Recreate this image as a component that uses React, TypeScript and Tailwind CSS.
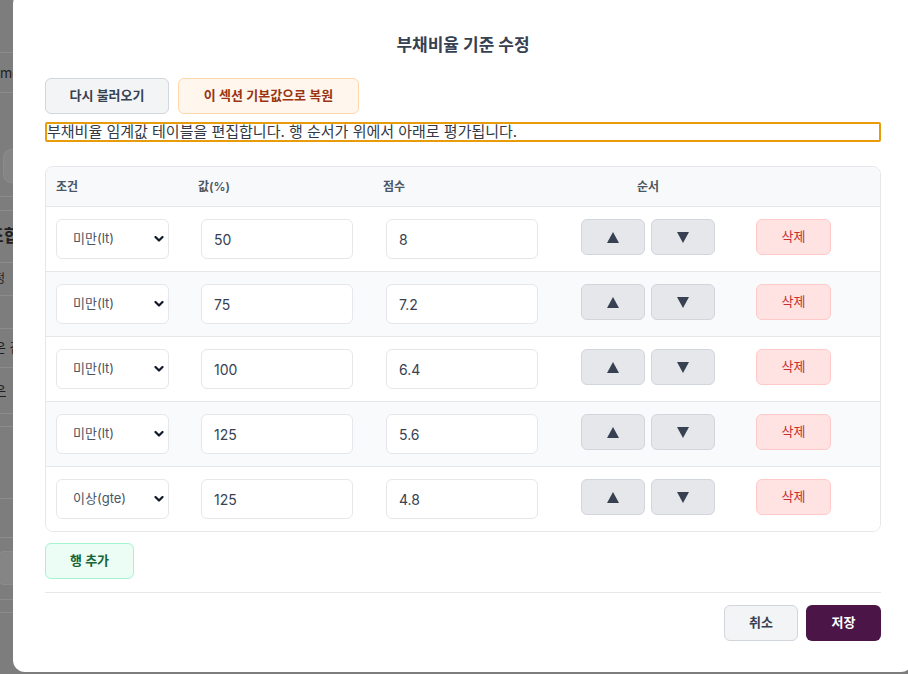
import React from 'react';

type Row = { op: string; value: string; score: string };

const rows: Row[] = [
  { op: '미만(lt)', value: '50', score: '8' },
  { op: '미만(lt)', value: '75', score: '7.2' },
  { op: '미만(lt)', value: '100', score: '6.4' },
  { op: '미만(lt)', value: '125', score: '5.6' },
  { op: '이상(gte)', value: '125', score: '4.8' },
];

const Chevron = () => (
  <svg width="10" height="7" viewBox="0 0 10 7" className="pointer-events-none absolute right-[5px] top-1/2 -translate-y-1/2">
    <path d="M1.5 1.5 L5 5 L8.5 1.5" fill="none" stroke="#111827" strokeWidth="2.2" strokeLinecap="round" strokeLinejoin="round" />
  </svg>
);

const Up = () => (
  <svg width="12" height="11" viewBox="0 0 12 11">
    <polygon points="6,0 12,11 0,11" fill="#374151" />
  </svg>
);

const Down = () => (
  <svg width="12" height="11" viewBox="0 0 12 11">
    <polygon points="0,0 12,0 6,11" fill="#374151" />
  </svg>
);

// greyed page peeking out on the left of the dialog
const BackPage: React.FC = () => (
  <div className="flex flex-col w-full h-[674px] bg-[#7d7d7d] text-[#1f1f1f]">
    <div className="h-[53px] border-b border-[#8c8c8c]" />
    <div className="h-[40px] border-b border-[#8c8c8c] flex items-center text-[14px] leading-[16px]">monthly</div>
    <div className="h-[56px]" />
    <div className="h-[34px] ml-[3px] w-[120px] rounded-lg border border-[#8c8c8c] bg-[#858585]" />
    <div className="h-[14px] border-b border-[#8c8c8c]" />
    <div className="h-[14px] border-b border-[#8c8c8c]" />
    <div className="h-[52px] border-b border-[#8c8c8c] flex items-center -ml-[12px] text-[17px] font-bold">조합</div>
    <div className="h-[33px] border-b border-[#8c8c8c] flex items-center -ml-[6px] text-[12px]">정</div>
    <div className="h-[33px] border-b border-[#8c8c8c]" />
    <div className="h-[39px] border-b border-[#8c8c8c] flex items-center -ml-[6px] text-[13px]">은 검토</div>
    <div className="h-[46px] border-b border-[#8c8c8c] flex items-center -ml-[6px] text-[13px]"><span className="underline">은</span></div>
    <div className="h-[13px] border-b border-[#8c8c8c]" />
    <div className="h-[72px] border-b border-[#8c8c8c]" />
    <div className="h-[39px] border-b border-[#8c8c8c]" />
    <div className="h-[13px]" />
    <div className="h-[34px] -ml-[4px] w-[120px] rounded-lg border border-[#8c8c8c] bg-[#858585]" />
    <div className="h-[15px] border-b border-[#8c8c8c]" />
    <div className="h-[13px] border-b border-[#8c8c8c]" />
  </div>
);

const App: React.FC = () => {
  return (
    <div className="relative w-[908px] h-[674px] overflow-hidden font-['Inter','Noto_Sans_CJK_KR',sans-serif]">
      <BackPage />

      {/* dialog */}
      <div className="absolute left-[13px] top-[-8px] w-[900px] bg-white rounded-xl px-8 pt-[40px] pb-[31px] flex flex-col text-[#374151]">
        <h2 className="h-7 flex items-center justify-center text-[17px] font-bold text-[#374151]">부채비율 기준 수정</h2>

        <div className="mt-[18px] flex gap-[9px]">
          <button className="h-9 w-[124px] rounded-md border border-gray-300 bg-gray-100 text-[13px] font-semibold text-[#374151]">다시 불러오기</button>
          <button className="h-9 w-[181px] rounded-md border border-orange-200 bg-orange-50 text-[13px] font-semibold text-[#9a3412]">이 섹션 기본값으로 복원</button>
        </div>

        <p className="mt-2 border-2 border-[#e89c0c] rounded-[2px] text-[15px] leading-[16px] text-[#333a45]">
          부채비율 임계값 테이블을 편집합니다. 행 순서가 위에서 아래로 평가됩니다.
        </p>

        <div className="mt-6 rounded-lg border border-gray-200 overflow-hidden">
          <div className="flex h-[40px] items-center border-b border-gray-200 bg-[#f8f9fb] text-[12px] font-semibold text-[#4b5563]">
            <div className="w-[142px] pl-[10px]">조건</div>
            <div className="w-[185px] pl-[10px]">값(%)</div>
            <div className="w-[185px] pl-[10px]">점수</div>
            <div className="w-[180px] text-center">순서</div>
            <div className="flex-1" />
          </div>

          {rows.map((r, i) => (
            <div
              key={i}
              className={`flex items-start py-3 ${i < rows.length - 1 ? 'border-b border-gray-200' : ''} ${i % 2 === 1 ? 'bg-[#f9fafb]' : 'bg-white'}`}
            >
              <div className="w-[142px] pl-[10px]">
                <div className="relative w-[113px]">
                  <select
                    defaultValue={r.op}
                    className="h-10 w-full appearance-none rounded-md border border-gray-200 bg-white pl-4 text-[13px] text-[#4b5563] outline-none"
                  >
                    <option>미만(lt)</option>
                    <option>이상(gte)</option>
                  </select>
                  <Chevron />
                </div>
              </div>
              <div className="w-[185px] pl-[13px]">
                <input
                  defaultValue={r.value}
                  className="h-10 w-[152px] rounded-md border border-gray-200 bg-white px-3 text-[14px] text-[#374151] outline-none"
                />
              </div>
              <div className="w-[185px] pl-[13px]">
                <input
                  defaultValue={r.score}
                  className="h-10 w-[152px] rounded-md border border-gray-200 bg-white px-3 text-[14px] text-[#374151] outline-none"
                />
              </div>
              <div className="w-[180px] flex justify-center gap-[6px]">
                <button className="h-9 w-16 flex items-center justify-center rounded-md border border-gray-300 bg-gray-200"><Up /></button>
                <button className="h-9 w-16 flex items-center justify-center rounded-md border border-gray-300 bg-gray-200"><Down /></button>
              </div>
              <div className="flex-1 pl-[18px]">
                <button className="h-9 w-[75px] rounded-md border border-red-200 bg-red-100 text-[13px] text-[#c53030]">삭제</button>
              </div>
            </div>
          ))}
        </div>

        <div className="mt-[11px]">
          <button className="h-9 w-[89px] rounded-md border border-emerald-200 bg-emerald-50 text-[13px] font-semibold text-[#166534]">행 추가</button>
        </div>

        <div className="mt-[13px] border-t border-gray-200" />

        <div className="mt-3 flex justify-end gap-2">
          <button className="h-9 w-[74px] rounded-md border border-gray-300 bg-gray-100 text-[13px] font-semibold text-[#374151]">취소</button>
          <button className="h-9 w-[75px] rounded-md bg-[#4c1548] text-[13px] font-bold text-white">저장</button>
        </div>
      </div>
    </div>
  );
};

export default App;
